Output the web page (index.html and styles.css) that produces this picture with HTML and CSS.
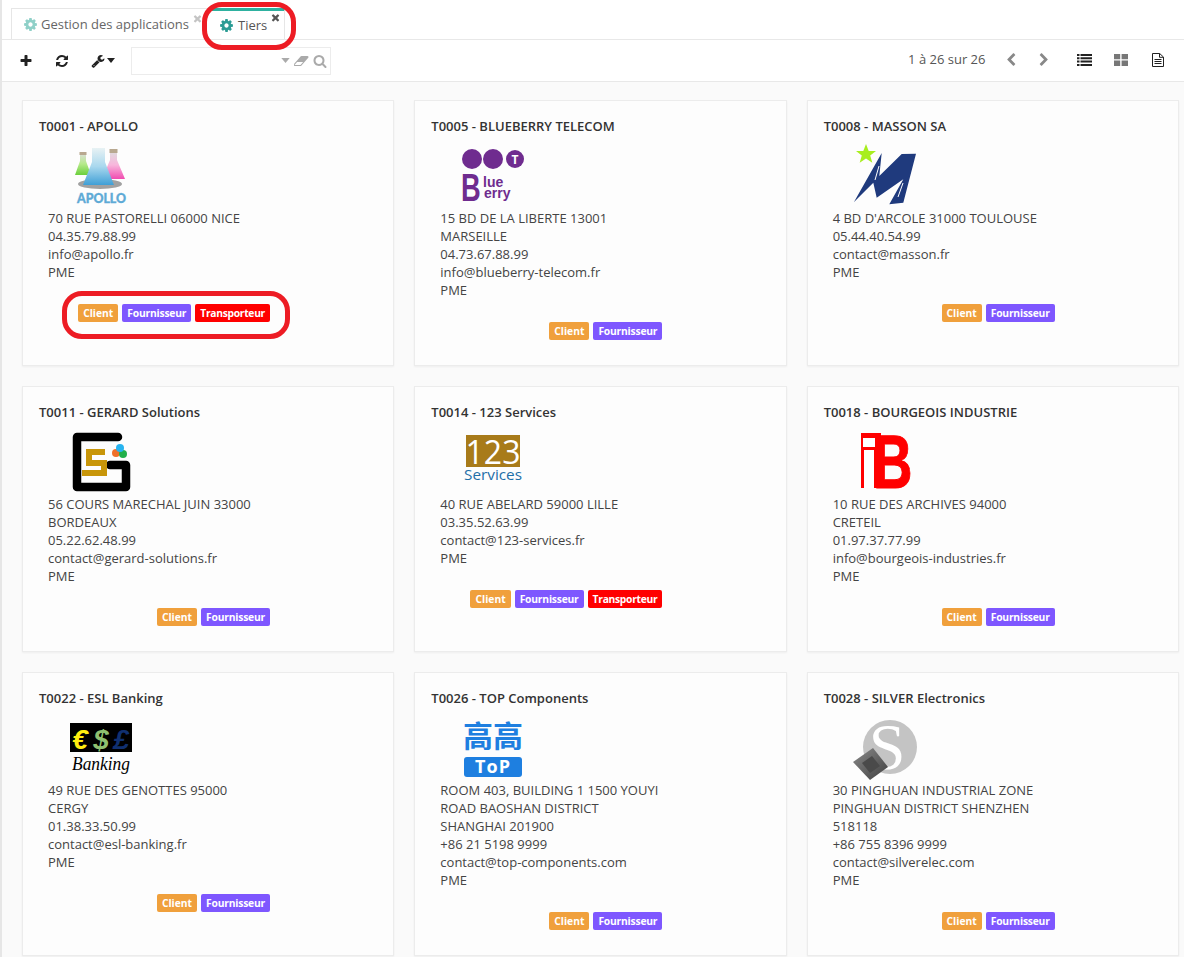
FILE: index.html
```html
<!DOCTYPE html>
<html lang="fr">
<head>
<meta charset="utf-8">
<title>Tiers</title>
<link rel="stylesheet" href="styles.css">
</head>
<body>
<svg class="defs" aria-hidden="true">
  <symbol id="i-cog" viewBox="0 0 1792 1792"><path d="M1152 896q0-106-75-181t-181-75-181 75-75 181 75 181 181 75 181-75 75-181zm512-109v222q0 12-8 23t-20 13l-185 28q-19 54-39 91 35 50 107 138 10 12 10 25t-9 23q-27 37-99 108t-94 71q-12 0-26-9l-138-108q-44 23-91 38-16 136-29 186-7 28-36 28h-222q-14 0-24.5-8.5t-11.5-21.5l-28-184q-49-16-90-37l-141 107q-10 9-25 9-14 0-25-11-126-114-165-168-7-10-7-23 0-12 8-23 15-21 51-66.5t54-70.5q-27-50-41-99l-183-27q-13-2-21-12.5t-8-23.5v-222q0-12 8-23t19-13l186-28q14-46 39-92-40-57-107-138-10-12-10-24 0-10 9-23 26-36 98.5-107.5t94.5-71.5q13 0 26 10l138 107q44-23 91-38 16-136 29-186 7-28 36-28h222q14 0 24.5 8.5t11.5 21.5l28 184q49 16 90 37l142-107q9-9 24-9 13 0 25 10 129 119 165 170 7 8 7 22 0 12-8 23-15 21-51 66.5t-54 70.5q26 50 41 98l183 28q13 2 21 12.5t8 23.5z"/></symbol>
  <symbol id="i-times" viewBox="0 0 1792 1792"><path d="M1490 1322q0 40-28 68l-136 136q-28 28-68 28t-68-28l-294-294-294 294q-28 28-68 28t-68-28l-136-136q-28-28-28-68t28-68l294-294-294-294q-28-28-28-68t28-68l136-136q28-28 68-28t68 28l294 294 294-294q28-28 68-28t68 28l136 136q28 28 28 68t-28 68l-294 294 294 294q28 28 28 68z"/></symbol>
  <symbol id="i-plus" viewBox="0 0 1792 1792"><path d="M1600 736v192q0 40-28 68t-68 28h-416v416q0 40-28 68t-68 28h-192q-40 0-68-28t-28-68v-416h-416q-40 0-68-28t-28-68v-192q0-40 28-68t68-28h416v-416q0-40 28-68t68-28h192q40 0 68 28t28 68v416h416q40 0 68 28t28 68z"/></symbol>
  <symbol id="i-refresh" viewBox="0 0 1792 1792"><path d="M1639 1056q0 5-1 7-64 268-268 434.5t-478 166.5q-146 0-282.5-55t-243.5-157l-129 129q-19 19-45 19t-45-19-19-45v-448q0-26 19-45t45-19h448q26 0 45 19t19 45-19 45l-137 137q71 66 161 102t187 36q134 0 250-65t186-179q11-17 53-117 8-23 30-23h192q13 0 22.5 9.5t9.5 22.5zm25-800v448q0 26-19 45t-45 19h-448q-26 0-45-19t-19-45 19-45l138-138q-148-137-349-137-134 0-250 65t-186 179q-11 17-53 117-8 23-30 23h-199q-13 0-22.5-9.5t-9.5-22.5v-7q65-268 270-434.5t480-166.5q146 0 284 55.5t245 156.5l130-129q19-19 45-19t45 19 19 45z"/></symbol>
  <symbol id="i-wrench" viewBox="0 0 1792 1792"><path d="M448 1472q0-26-19-45t-45-19-45 19-19 45 19 45 45 19 45-19 19-45zm644-420l-682 682q-37 37-90 37-52 0-91-37l-106-108q-38-36-38-90 0-53 38-91l681-681q39 98 114.5 173.5t173.5 114.5zm634-435q0 39-23 106-47 134-164.5 217.5t-258.5 83.5q-185 0-316.5-131.5t-131.5-316.5 131.5-316.5 316.5-131.5q58 0 121.5 16.5t107.5 46.5q16 11 16 28t-16 28l-293 169v224l193 107q5-3 79-48.5t135.5-81 70.5-35.5q15 0 23.5 10t8.5 25z"/></symbol>
  <symbol id="i-caret" viewBox="0 0 10 6"><path d="M0 0h10L5 6z"/></symbol>
  <symbol id="i-eraser" viewBox="0 0 1920 1792"><path d="M832 1408l336-384h-768l-336 384h768zm1013-1077q15 34 9.5 71.5t-30.5 65.5l-896 1024q-38 44-96 44h-768q-38 0-69.5-20.5t-47.5-54.5q-15-34-9.5-71.5t30.5-65.5l896-1024q38-44 96-44h768q38 0 70 20.5t47 54.5z"/></symbol>
  <symbol id="i-search" viewBox="0 0 1792 1792"><path d="M1216 832q0-185-131.5-316.5t-316.5-131.5-316.5 131.5-131.5 316.5 131.5 316.5 316.5 131.5 316.5-131.5 131.5-316.5zm512 832q0 52-38 90t-90 38q-54 0-90-38l-343-342q-179 124-399 124-143 0-273.5-55.5t-225-150-150-225-55.5-273.5 55.5-273.5 150-225 225-150 273.5-55.5 273.5 55.5 225 150 150 225 55.5 273.5q0 220-124 399l343 343q37 37 37 90z"/></symbol>
  <symbol id="i-left" viewBox="0 0 1792 1792"><path d="M1427 301l-531 531 531 531q19 19 19 45t-19 45l-166 166q-19 19-45 19t-45-19l-742-742q-19-19-19-45t19-45l742-742q19-19 45-19t45 19l166 166q19 19 19 45t-19 45z"/></symbol>
  <symbol id="i-right" viewBox="0 0 1792 1792"><path d="M1363 877l-742 742q-19 19-45 19t-45-19l-166-166q-19-19-19-45t19-45l531-531-531-531q-19-19-19-45t19-45l166-166q19-19 45-19t45 19l742 742q19 19 19 45t-19 45z"/></symbol>
  <symbol id="i-list" viewBox="0 0 15 12"><path d="M0 0h2.5v2H0zM3.5 0H15v2H3.5zM0 3.3h2.5v2H0zM3.5 3.3H15v2H3.5zM0 6.6h2.5v2H0zM3.5 6.6H15v2H3.5zM0 9.9h2.5v2H0zM3.5 9.9H15v2H3.5z"/></symbol>
  <symbol id="i-grid" viewBox="0 0 14 12"><path d="M0 0h6.2v5.2H0zM7.6 0H14v5.2H7.6zM0 6.6h6.2V12H0zM7.6 6.6H14V12H7.6z"/></symbol>
  <symbol id="i-file" viewBox="0 0 12 14"><path d="M.5.5h7.2l3.8 3.6v9.4H.5z" fill="none" stroke="currentColor"/><path d="M7.5.5v3.8h4M2.5 6.5h7M2.5 8.5h7M2.5 10.5h7" fill="none" stroke="currentColor"/></symbol>
</svg>

<div class="app">
  <nav class="tabs">
    <div class="tab tab-first">
      <svg class="tab-gear"><use href="#i-cog"/></svg>
      <span>Gestion des applications</span>
      <svg class="tab-close"><use href="#i-times"/></svg>
    </div>
    <div class="tab tab-active">
      <svg class="tab-gear"><use href="#i-cog"/></svg>
      <span>Tiers</span>
      <svg class="tab-close"><use href="#i-times"/></svg>
      <div class="ring ring-tab"></div>
    </div>
  </nav>

  <div class="toolbar">
    <button class="tool"><svg class="ic13"><use href="#i-plus"/></svg></button>
    <button class="tool"><svg class="ic13"><use href="#i-refresh"/></svg></button>
    <button class="tool tool-menu"><svg class="ic13"><use href="#i-wrench"/></svg><svg class="caret"><use href="#i-caret"/></svg></button>
    <div class="search">
      <svg class="caret caret-grey"><use href="#i-caret"/></svg>
      <svg class="eraser"><use href="#i-eraser"/></svg>
      <svg class="magnifier"><use href="#i-search"/></svg>
    </div>
    <div class="pager">1 à 26 sur 26</div>
    <button class="tool tool-nav"><svg class="ic13 grey"><use href="#i-left"/></svg></button>
    <button class="tool tool-nav"><svg class="ic13 grey"><use href="#i-right"/></svg></button>
    <button class="tool view first-view"><svg class="ic-list"><use href="#i-list"/></svg></button>
    <button class="tool view"><svg class="ic-grid"><use href="#i-grid"/></svg></button>
    <button class="tool view"><svg class="ic-file"><use href="#i-file"/></svg></button>
  </div>

  <main class="grid">

    <article class="card">
      <h2>T0001 - APOLLO</h2>
      <div class="body">
        <svg class="logo" viewBox="0 0 64 64">
          <defs>
            <linearGradient id="ap-b" x1="0" y1="0" x2="0" y2="1"><stop offset="0" stop-color="#e8f2f4"/><stop offset=".5" stop-color="#a9d8ee"/><stop offset="1" stop-color="#3f9fd6"/></linearGradient>
            <linearGradient id="ap-g" x1="0" y1="0" x2="0" y2="1"><stop offset="0" stop-color="#ddd"/><stop offset=".5" stop-color="#b6ea8a"/><stop offset="1" stop-color="#6bcf3c"/></linearGradient>
            <linearGradient id="ap-p" x1="0" y1="0" x2="0" y2="1"><stop offset="0" stop-color="#ddd"/><stop offset=".5" stop-color="#f8b6dc"/><stop offset="1" stop-color="#f04cb0"/></linearGradient>
          </defs>
          <ellipse cx="31" cy="40" rx="22" ry="5" class="ap-shadow"/>
          <path d="M11 9h6v8l5 14H6l5-14z" fill="url(#ap-g)"/>
          <rect x="10.500" y="8" width="7" height="3" class="ap-cap"/>
          <path d="M41 7h7v9l8 19H33l8-19z" fill="url(#ap-p)"/>
          <rect x="40.500" y="5" width="8" height="4" class="ap-cap"/>
          <path d="M23 4h13v14l9 23H14l9-23z" fill="url(#ap-b)"/>
          <text x="32.500" y="59" class="ap-text" textLength="49" lengthAdjust="spacingAndGlyphs">APOLLO</text>
        </svg>
        <p>70 RUE PASTORELLI 06000 NICE<br>04.35.79.88.99<br>info@apollo.fr<br>PME</p>
        <div class="tags"><span class="tag t-c">Client</span><span class="tag t-f">Fournisseur</span><span class="tag t-t">Transporteur</span></div>
      </div>
      <div class="ring ring-tags"></div>
    </article>

    <article class="card">
      <h2>T0005 - BLUEBERRY TELECOM</h2>
      <div class="body">
        <svg class="logo bb" viewBox="0 0 64 64">
          <circle cx="11" cy="15" r="10"/><circle cx="32" cy="15" r="10"/><circle cx="54" cy="15" r="9"/>
          <text x="54" y="19.500" class="bb-t">T</text>
          <text class="bb-big" transform="translate(0,57) scale(.7,1)">B</text>
          <text x="22" y="43" class="bb-small">lue</text>
          <text x="23" y="54" class="bb-small">erry</text>
        </svg>
        <p>15 BD DE LA LIBERTE 13001 MARSEILLE<br>04.73.67.88.99<br>info@blueberry-telecom.fr<br>PME</p>
        <div class="tags"><span class="tag t-c">Client</span><span class="tag t-f">Fournisseur</span></div>
      </div>
    </article>

    <article class="card">
      <h2>T0008 - MASSON SA</h2>
      <div class="body">
        <svg class="logo" viewBox="0 0 64 64">
          <polygon class="ms-star" points="12,0 14.700,7 22,7 16.200,11.600 18.300,18.800 12,14.600 5.700,18.800 7.800,11.600 2,7 9.300,7"/>
          <polygon class="ms-m" points="0,58 27.700,9 25.300,32 47.700,10 62,9.700 49.300,58.700 35.300,60.300 49.300,35.300 22.700,53.700 19.300,38.700"/>
          <path class="ms-slit" d="M44 53l5-14M25 22l-4 14"/>
        </svg>
        <p>4 BD D'ARCOLE 31000 TOULOUSE<br>05.44.40.54.99<br>contact@masson.fr<br>PME</p>
        <div class="tags"><span class="tag t-c">Client</span><span class="tag t-f">Fournisseur</span></div>
      </div>
    </article>

    <article class="card">
      <h2>T0011 - GERARD Solutions</h2>
      <div class="body">
        <svg class="logo" viewBox="0 0 64 64">
          <path class="gs-g" d="M49 7H8V57H57V35H41"/>
          <path class="gs-s" d="M36 22H20V33H35V43H13"/>
          <circle cx="47" cy="23" r="4" class="gs-o"/>
          <circle cx="54" cy="24" r="4" class="gs-v"/>
          <circle cx="51" cy="18" r="4" class="gs-b"/>
        </svg>
        <p>56 COURS MARECHAL JUIN 33000 BORDEAUX<br>05.22.62.48.99<br>contact@gerard-solutions.fr<br>PME</p>
        <div class="tags"><span class="tag t-c">Client</span><span class="tag t-f">Fournisseur</span></div>
      </div>
    </article>

    <article class="card">
      <h2>T0014 - 123 Services</h2>
      <div class="body">
        <svg class="logo" viewBox="0 0 64 64">
          <rect x="5" y="5" width="54" height="32" class="s-gold"/>
          <text x="32" y="34" class="s-num">123</text>
          <text x="32" y="50" class="s-word" textLength="58" lengthAdjust="spacingAndGlyphs">Services</text>
        </svg>
        <p>40 RUE ABELARD 59000 LILLE<br>03.35.52.63.99<br>contact@123-services.fr<br>PME</p>
        <div class="tags"><span class="tag t-c">Client</span><span class="tag t-f">Fournisseur</span><span class="tag t-t">Transporteur</span></div>
      </div>
    </article>

    <article class="card">
      <h2>T0018 - BOURGEOIS INDUSTRIE</h2>
      <div class="body">
        <svg class="logo" viewBox="0 0 64 64">
          <rect x="7" y="3" width="20" height="55" class="ib-red"/>
          <rect x="9" y="8" width="12" height="9" class="ib-white"/>
          <rect x="10" y="20" width="10" height="38" class="ib-white"/>
          <text class="ib-b" transform="translate(19,58) scale(.72,1)">B</text>
        </svg>
        <p>10 RUE DES ARCHIVES 94000 CRETEIL<br>01.97.37.77.99<br>info@bourgeois-industries.fr<br>PME</p>
        <div class="tags"><span class="tag t-c">Client</span><span class="tag t-f">Fournisseur</span></div>
      </div>
    </article>

    <article class="card">
      <h2>T0022 - ESL Banking</h2>
      <div class="body">
        <svg class="logo" viewBox="0 0 64 64">
          <rect x="1" y="7" width="62" height="29" class="es-bg"/>
          <text x="11" y="33" class="es-cur es-y">€</text>
          <text x="32" y="33" class="es-cur es-g">$</text>
          <text x="52" y="33" class="es-cur es-n">£</text>
          <text x="32" y="54" class="es-word" textLength="58" lengthAdjust="spacingAndGlyphs">Banking</text>
        </svg>
        <p>49 RUE DES GENOTTES 95000 CERGY<br>01.38.33.50.99<br>contact@esl-banking.fr<br>PME</p>
        <div class="tags"><span class="tag t-c">Client</span><span class="tag t-f">Fournisseur</span></div>
      </div>
    </article>

    <article class="card">
      <h2>T0026 - TOP Components</h2>
      <div class="body">
        <svg class="logo" viewBox="0 0 64 64">
          <text x="32" y="31" class="tp-cjk">高高</text>
          <rect x="3" y="41" width="58" height="20" rx="3" class="tp-box"/>
          <text x="32" y="57" class="tp-word">ToP</text>
        </svg>
        <p>ROOM 403, BUILDING 1 1500 YOUYI ROAD BAOSHAN DISTRICT SHANGHAI 201900<br>+86 21 5198 9999<br>contact@top-components.com<br>PME</p>
        <div class="tags"><span class="tag t-c">Client</span><span class="tag t-f">Fournisseur</span></div>
      </div>
    </article>

    <article class="card">
      <h2>T0028 - SILVER Electronics</h2>
      <div class="body">
        <svg class="logo" viewBox="0 0 64 64">
          <defs><linearGradient id="sv-c" x1="0" y1="0" x2="1" y2="1"><stop offset="0" stop-color="#8a8a8a"/><stop offset="1" stop-color="#3f3f3f"/></linearGradient></defs>
          <circle cx="36" cy="31" r="27" class="sv-disc"/>
          <text x="33" y="53" class="sv-s">S</text>
          <polygon points="19,32 34,51 16,64 -1,46" fill="url(#sv-c)"/>
          <polygon points="18,40 26,50 16,57 8,47" class="sv-core"/>
        </svg>
        <p>30 PINGHUAN INDUSTRIAL ZONE PINGHUAN DISTRICT SHENZHEN 518118<br>+86 755 8396 9999<br>contact@silverelec.com<br>PME</p>
        <div class="tags"><span class="tag t-c">Client</span><span class="tag t-f">Fournisseur</span></div>
      </div>
    </article>

  </main>
</div>
</body>
</html>
```

FILE: styles.css
```css
* { box-sizing: border-box; }
html, body { margin: 0; height: 100%; overflow: hidden; }
body {
  background: #fafafa;
  color: #444;
  font-family: "Open Sans", "Noto Sans", sans-serif;
  font-size: 13px;
  line-height: 18px;
}
.defs { display: none; }
.app { border-left: 2px solid #e6e6e6; min-height: 100%; }

/* tabs */
.tabs {
  display: flex;
  height: 40px;
  padding: 8px 0 0 9px;
  background: #fff;
  border-bottom: 1px solid #e8e8e8;
}
.tab {
  position: relative;
  display: flex;
  align-items: center;
  height: 31px;
  border-top: 1px solid #e6e6e6;
  color: #666;
  font-size: 13px;
}
.tab-first {
  width: 197px;
  padding: 0 0 0 11px;
  border-left: 1px solid #e6e6e6;
}
.tab-first .tab-gear { fill: #8fd0c8; }
.tab-first span { color: #666; }
.tab-active {
  width: 77px;
  padding: 0 0 0 11px;
  border-top: 3px solid #2eb1a0;
  border-right: 1px solid #e6e6e6;
  color: #555;
}
.tab-gear { width: 15px; height: 15px; margin-right: 3px; fill: #2b9c94; flex: none; }
.tab-active .tab-gear { margin-right: 4px; }
.tab-close { position: absolute; width: 11px; height: 11px; top: 3px; fill: #555; }
.tab-first .tab-close { left: 180px; fill: #c4c4c4; top: 4px; }
.tab-active .tab-close { left: 62px; top: 1px; }

/* annotation rings */
.ring { position: absolute; border: 5px solid #ed1c24; border-radius: 20px; pointer-events: none; }
.ring-tab { left: -6px; top: -9px; width: 94px; height: 48px; }
.ring-tags { left: 39px; top: 190px; width: 228px; height: 48px; }

/* toolbar */
.toolbar {
  display: flex;
  align-items: center;
  height: 42px;
  padding: 0 7.500px 0 6px;
  background: #fff;
  border-bottom: 1px solid #e8e8e8;
}
.tool {
  display: flex;
  align-items: center;
  justify-content: center;
  width: 36px;
  height: 28px;
  padding: 0;
  border: 0;
  background: none;
  color: #222;
}
.tool svg { fill: currentColor; }
.tool-menu { width: 45px; justify-content: flex-start; padding-left: 11px; }
.ic13 { width: 14px; height: 14px; }
.grey { color: #888; }
.caret { width: 8px; height: 5px; margin-left: 2px; fill: #222; }
.search {
  display: flex;
  align-items: center;
  justify-content: flex-end;
  width: 200px;
  height: 28px;
  margin-left: 6px;
  padding-right: 3px;
  border: 1px solid #ececec;
  background: #fff;
}
.search svg { fill: #aaa; }
.caret-grey { width: 9px; height: 5px; margin-right: 4px; fill: #aaa; }
.eraser { width: 15px; height: 14px; margin-right: 4px; }
.magnifier { width: 14px; height: 14px; }
.pager { margin: 0 9px 3px auto; font-size: 13px; color: #555; }
.tool-nav { width: 33px; margin-bottom: 2px; }
.view { width: 37px; margin-bottom: 2px; }
.first-view { margin-left: 5px; }
.ic-list { width: 15px; height: 12px; }
.ic-grid { width: 14px; height: 12px; color: #777; }
.ic-file { width: 12px; height: 14px; }

/* cards */
.grid {
  display: grid;
  grid-template-columns: repeat(3, 372.333px);
  column-gap: 20px;
  row-gap: 20px;
  padding: 18px 0 0 20px;
}
.card {
  position: relative;
  padding: 16px 0 25px 16px;
  background: #fdfdfd;
  border: 1px solid #ececec;
  box-shadow: 0 1px 2px rgba(0,0,0,.05);
}
.card h2 {
  margin: 0;
  color: #333;
  font-size: 13px;
  font-weight: 600;
  line-height: 18px;
}
.body { width: 222px; margin-left: 9px; }
.logo { display: block; width: 64px; height: 64px; margin: 9px 0 1px 21px; overflow: visible; }
.body p { margin: 0; }
.tags { display: flex; justify-content: flex-end; gap: 4px; margin-top: 23px; }
.tag {
  height: 18px;
  padding: 0 5px;
  border-radius: 2px;
  color: #fff;
  font-size: 10.300px;
  font-weight: 700;
  line-height: 18px;
}
.t-c { background: #f0a03c; }
.t-f { background: #7e57ff; letter-spacing: -.2px; }
.t-t { background: #f00; letter-spacing: -.3px; }

/* logos */
.ap-shadow { fill: #555; opacity: .55; }
.ap-cap { fill: #b8a890; }
.ap-text { fill: #5eaad6; stroke: #5eaad6; stroke-width: .4; font-family: "Lato", sans-serif; font-weight: 900; font-size: 14px; text-anchor: middle; }
.bb { fill: #6f2c8f; }
.bb-t { fill: #fff; font-family: "Open Sans", sans-serif; font-weight: 700; font-size: 12px; text-anchor: middle; }
.bb-big { font-family: "Liberation Sans", sans-serif; font-weight: 700; font-size: 39px; }
.bb-small { font-family: "Liberation Sans", sans-serif; font-weight: 700; font-size: 14px; }
.ms-star { fill: #a8ee1e; }
.ms-m { fill: #1f3a7d; }
.ms-slit { fill: none; stroke: #fff; stroke-width: 1; }
.gs-g { fill: none; stroke: #000; stroke-width: 8.500; stroke-linecap: round; stroke-linejoin: round; }
.gs-s { fill: none; stroke: #c8960a; stroke-width: 6; }
.gs-o { fill: #f0702a; }
.gs-v { fill: #22b04a; }
.gs-b { fill: #28b4f0; }
.s-gold { fill: #a87b1a; }
.s-num { fill: #fff; font-family: "Open Sans", sans-serif; font-size: 32px; text-anchor: middle; }
.s-word { fill: #1f6fa8; font-family: "Open Sans", sans-serif; font-size: 15px; text-anchor: middle; }
.ib-red { fill: #f00; }
.ib-white { fill: #fff; }
.ib-b { fill: #f00; stroke: #f00; stroke-width: 1; font-family: "Liberation Sans", sans-serif; font-weight: 700; font-size: 76px; }
.es-bg { fill: #000; }
.es-cur { font-family: "Liberation Sans", sans-serif; font-weight: 700; font-style: italic; font-size: 28px; text-anchor: middle; }
.es-y { fill: #ffee10; }
.es-g { fill: #8fc070; }
.es-n { fill: #103070; }
.es-word { fill: #000; font-family: "Liberation Serif", serif; font-style: italic; font-size: 19px; text-anchor: middle; }
.tp-cjk { fill: #1e7fe0; font-family: "Noto Sans CJK SC", sans-serif; font-weight: 700; font-size: 30px; text-anchor: middle; }
.tp-box { fill: #1e7fe0; }
.tp-word { fill: #fff; font-family: "Open Sans", sans-serif; font-weight: 700; font-size: 18px; letter-spacing: 1px; text-anchor: middle; }
.sv-disc { fill: #c4c4c4; }
.sv-s { fill: #fff; font-family: "Liberation Serif", serif; font-size: 66px; text-anchor: middle; }
.sv-core { fill: #4a4a4a; }
```
